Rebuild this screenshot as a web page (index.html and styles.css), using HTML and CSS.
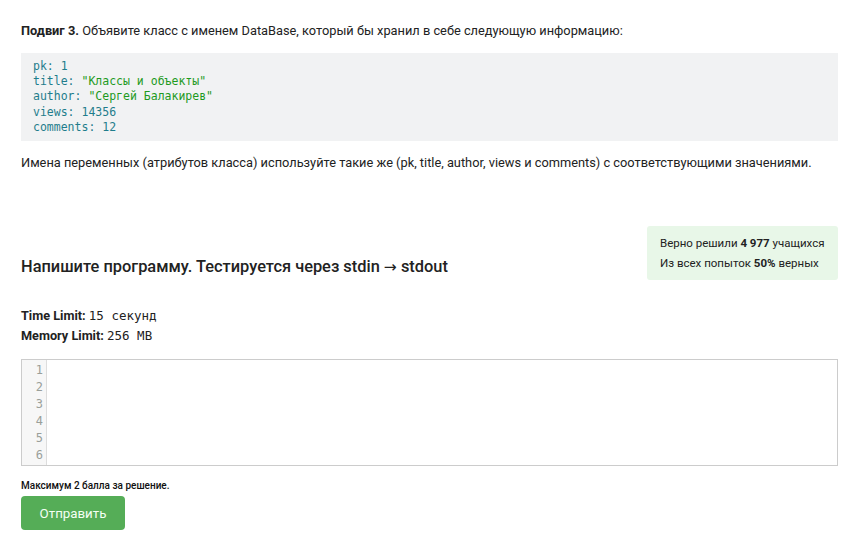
FILE: index.html
```html
<!DOCTYPE html>
<html lang="ru">
<head>
<meta charset="utf-8">
<link rel="stylesheet" href="styles.css">
</head>
<body>
<div class="page">
  <p class="task"><b>Подвиг 3.</b> Объявите класс с именем DataBase, который бы хранил в себе следующую информацию:</p>
  <pre class="code"><span class="k">pk: 1</span>
<span class="k">title: </span><span class="s">"Классы и объекты"</span>
<span class="k">author: </span><span class="s">"Сергей Балакирев"</span>
<span class="k">views: 14356</span>
<span class="k">comments: 12</span></pre>
  <p class="note">Имена переменных (атрибутов класса) используйте такие же (pk, title, author, views и comments) с соответствующими значениями.</p>

  <div class="head-row">
    <h2 class="title">Напишите программу. Тестируется через stdin <span class="arrow">→</span> stdout</h2>
    <div class="stats">
      <div>Верно решили <b>4 977</b> учащихся</div>
      <div>Из всех попыток <b>50%</b> верных</div>
    </div>
  </div>

  <div class="limits">
    <div><b>Time Limit:</b> <span class="mono">15 секунд</span></div>
    <div><b>Memory Limit:</b> <span class="mono">256 MB</span></div>
  </div>

  <div class="editor">
    <div class="gutter">
      <div>1</div><div>2</div><div>3</div><div>4</div><div>5</div><div>6</div>
    </div>
    <div class="area"></div>
  </div>

  <p class="max">Максимум 2 балла за решение.</p>
  <button class="send">Отправить</button>
</div>
</body>
</html>
```
FILE: styles.css
```css
* { box-sizing: border-box; }
html, body { margin: 0; padding: 0; background: #fff; }
body {
  font-family: Roboto, "Noto Sans", sans-serif;
  color: #222;
}
.page {
  padding: 22px 6px 0 21px;
}
.task {
  margin: 0;
  font-size: 12.8px;
  line-height: 18px;
}
.task b { font-weight: 700; }
.code {
  margin: 13px 0 0;
  background: #f1f2f3;
  padding: 6px 12px 6px;
  font-family: "DejaVu Sans Mono", monospace;
  font-size: 11.5px;
  line-height: 15.2px;
}
.code .k { color: #1f7d8c; }
.code .s { color: #1e9a1e; }
.note {
  margin: 13px 0 0;
  font-size: 12.8px;
  line-height: 18px;
}
.head-row {
  margin-top: 54px;
  display: flex;
  justify-content: space-between;
  align-items: flex-end;
}
.title {
  margin: 0 0 3px;
  font-size: 16.4px;
  font-weight: 500;
  line-height: 20px;
}
.arrow {
  font-family: "DejaVu Sans", sans-serif;
  font-weight: 400;
  font-size: 15.5px;
}
.stats {
  width: 191px;
  background: #e8f7e8;
  border-radius: 3px;
  padding: 7px 0 7px 13px;
  font-size: 11.5px;
  line-height: 20px;
  color: #222;
}
.limits {
  margin-top: 26px;
  font-size: 12.7px;
  line-height: 20px;
}
.limits b { font-weight: 700; }
.mono {
  font-family: "DejaVu Sans Mono", monospace;
  font-size: 12.5px;
}
.editor {
  margin-top: 13px;
  display: flex;
  height: 107px;
  border: 1px solid #ccc;
}
.gutter {
  width: 25px;
  background: #f7f7f7;
  border-right: 1px solid #ddd;
  padding-top: 2px;
  padding-right: 3px;
  text-align: right;
  font-family: "DejaVu Sans Mono", monospace;
  font-size: 12px;
  line-height: 17px;
  color: #9a9f9a;
}
.area { flex: 1; }
.max {
  margin: 14px 0 0;
  font-size: 10px;
  font-weight: 500;
  line-height: 12px;
  color: #111;
}
.send {
  margin-top: 4px;
  width: 104px;
  height: 34px;
  border: none;
  border-radius: 4px;
  background: #55ad57;
  color: #f4fff4;
  font-family: Roboto, sans-serif;
  font-size: 13.3px;
  padding: 0;
}
```
